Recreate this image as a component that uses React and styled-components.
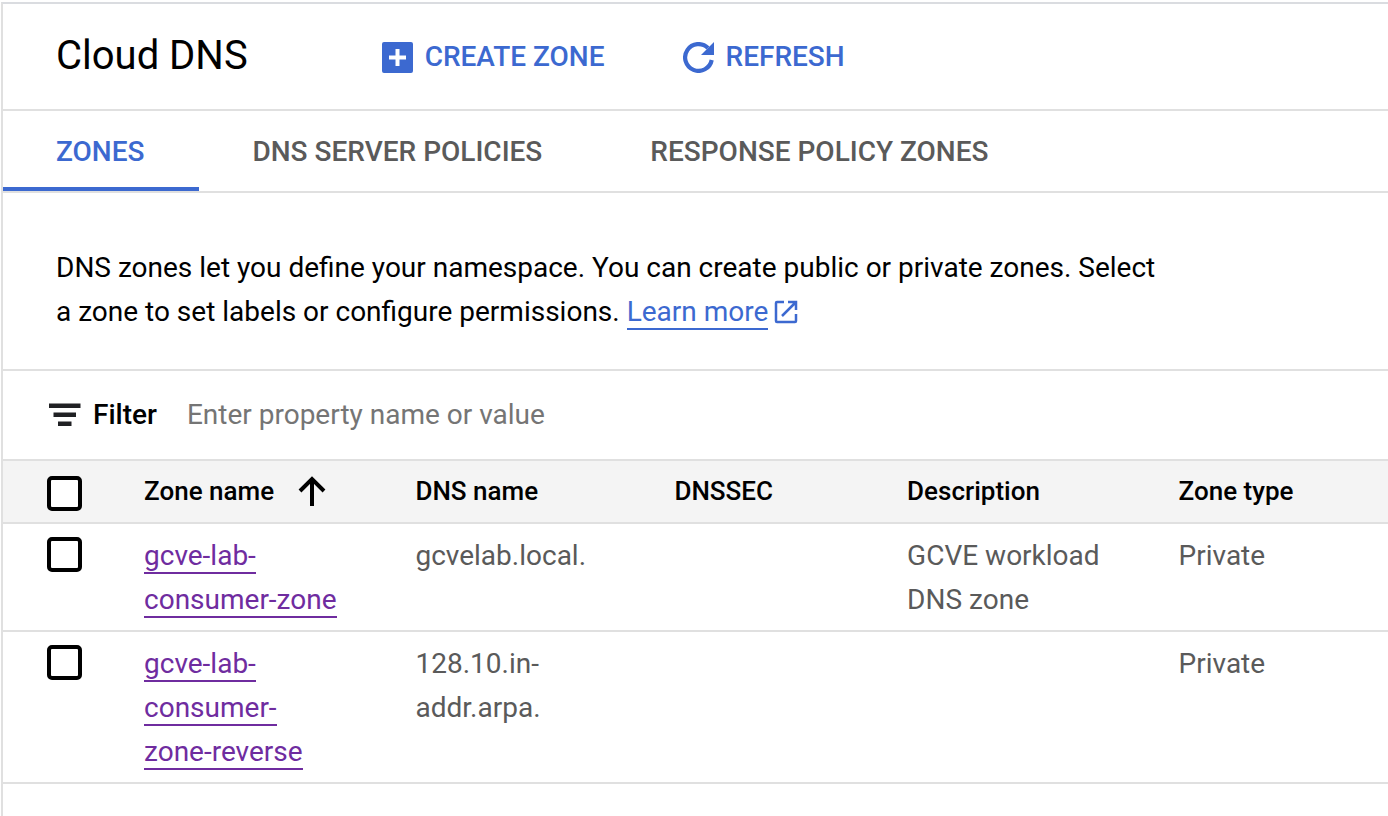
import React, { useState } from 'react';
import styled, { createGlobalStyle, css } from 'styled-components';

const GlobalStyle = createGlobalStyle`
	:root {
		--primary-clr: #3c69d0;
		--visited-clr: #6f2c9f;
		--soft-clr: #5a5a5a;
		--line-clr: #e0e0e0;
	}

	* {
		box-sizing: border-box;
	}

	body {
		margin: 0;
		background: #fff;
		color: #000;
		font-family: Roboto, 'Liberation Sans', sans-serif;
		font-size: 28px;
		line-height: 44px;
	}
`;

const Page = styled.div`
	min-height: 100vh;
	padding: 2px 0 0 1px;
	display: flex;
	flex-direction: column;
`;

const Panel = styled.main`
	flex: 1;
	border-top: 2px solid #dadce0;
	border-left: 2px solid var(--line-clr);
`;

const Header = styled.header`
	display: flex;
	align-items: center;
	padding: 28px 53px 29px;
	border-bottom: 2px solid var(--line-clr);
`;

const Title = styled.h1`
	margin: 0 134px 0 0;
	font-size: 40px;
	font-weight: 400;
	line-height: 48px;
`;

const Actions = styled.div`
	display: flex;
	gap: 78px;
	padding-top: 2px;
`;

const ActionButton = styled.button`
	display: flex;
	align-items: center;
	gap: 12px;
	padding: 0;
	border: 0;
	background: none;
	color: var(--primary-clr);
	font: inherit;
	font-weight: 500;
	cursor: pointer;
`;

const Tabs = styled.nav`
	display: flex;
	border-bottom: 2px solid var(--line-clr);
`;

const Tab = styled.button`
	padding: 19px 55px 13px 53px;
	border: 0;
	border-bottom: 4px solid transparent;
	background: none;
	color: var(--soft-clr);
	font: inherit;
	font-weight: 500;
	cursor: pointer;

	${({ $active }) =>
		$active &&
		css`
			color: var(--primary-clr);
			border-color: var(--primary-clr);
		`}
`;

const Intro = styled.p`
	margin: 0;
	max-width: 1216px;
	padding: 53px 53px 35px;
`;

const TextLink = styled.a`
	color: var(--primary-clr);
	text-decoration: none;
	border-bottom: 2px solid currentColor;
`;

const ZoneLink = styled(TextLink)`
	color: var(--visited-clr);
`;

const OpenIcon = styled.svg`
	margin-left: 6px;
	vertical-align: -3px;
	color: var(--primary-clr);
`;

const FilterBar = styled.div`
	display: flex;
	align-items: center;
	padding: 22px 46px;
	border-top: 2px solid var(--line-clr);
`;

const FilterLabel = styled.label`
	display: flex;
	align-items: center;
	gap: 12px;
	margin-right: 30px;
	font-weight: 500;
`;

const FilterInput = styled.input`
	flex: 1;
	min-width: 0;
	padding: 0;
	border: 0;
	outline: 0;
	background: none;
	color: inherit;
	font: inherit;

	&::placeholder {
		color: #757575;
		opacity: 1;
	}
`;

const Table = styled.table`
	width: 100%;
	table-layout: fixed;
	border-collapse: separate;
	border-spacing: 0;
	border-top: 2px solid var(--line-clr);
`;

const Col = styled.col`
	width: ${({ $width }) => $width};
`;

const HeadCell = styled.th`
	padding: 8px 75px 9px 0;
	border-bottom: 2px solid var(--line-clr);
	background: #f4f4f4;
	font-size: 26px;
	font-weight: 500;
	text-align: left;
	vertical-align: top;
`;

const Cell = styled.td`
	padding: 10px 75px 8px 0;
	border-bottom: 2px solid var(--line-clr);
	color: var(--soft-clr);
	vertical-align: top;
`;

const HeadCheckCell = styled(HeadCell)`
	padding: 15px 0 0 44px;
`;

const CheckCell = styled(Cell)`
	padding: 13px 0 0 44px;
`;

const SortButton = styled.button`
	display: flex;
	align-items: center;
	gap: 24px;
	padding: 0;
	border: 0;
	background: none;
	color: inherit;
	font: inherit;
	white-space: nowrap;
	cursor: pointer;
`;

const Checkbox = styled.input`
	appearance: none;
	display: block;
	width: 35px;
	height: 35px;
	margin: 0;
	border: 4px solid #000;
	border-radius: 5px;
	background: #fff;
	cursor: pointer;

	&:checked {
		background: var(--primary-clr);
		box-shadow: inset 0 0 0 4px #fff;
	}
`;

const AddIcon = () => (
	<svg width='31' height='31' viewBox='0 0 31 31' aria-hidden='true'>
		<path
			fill='currentColor'
			fillRule='evenodd'
			d='M2 0h27a2 2 0 0 1 2 2v27a2 2 0 0 1-2 2H2a2 2 0 0 1-2-2V2a2 2 0 0 1 2-2zm11.500 7v6.500H7v4h6.500V24h4v-6.500H24v-4h-6.500V7z'
		/>
	</svg>
);

const RefreshIcon = () => (
	<svg width='31' height='31' viewBox='0 0 31 31' aria-hidden='true'>
		<path
			d='M28.700 18A13.400 13.400 0 1 1 25 6'
			fill='none'
			stroke='currentColor'
			strokeWidth='4.200'
		/>
		<path d='M31 0v13H18z' fill='currentColor' />
	</svg>
);

const FilterIcon = () => (
	<svg width='32' height='24' viewBox='0 0 32 24' aria-hidden='true'>
		<path
			fill='#202124'
			d='M0 .500h31.500v4.500H0zM4.500 9.500h22.500v4.500H4.500zM9 18.500h13.500v4.500H9z'
		/>
	</svg>
);

const SortIcon = () => (
	<svg width='28' height='30' viewBox='0 0 28 30' aria-hidden='true'>
		<path
			d='M14 30V3M2 15L14 3l12 12'
			fill='none'
			stroke='currentColor'
			strokeWidth='4'
		/>
	</svg>
);

const columns = ['DNS name', 'DNSSEC', 'Description', 'Zone type'];

const zones = [
	{
		name: 'gcve-lab-consumer-zone',
		dns: 'gcvelab.local.',
		dnssec: '',
		description: 'GCVE workload DNS zone',
		type: 'Private',
	},
	{
		name: 'gcve-lab-consumer-zone-reverse',
		dns: '128.10.in-addr.arpa.',
		dnssec: '',
		description: '',
		type: 'Private',
	},
];

const tabs = ['ZONES', 'DNS SERVER POLICIES', 'RESPONSE POLICY ZONES'];

const App = () => {
	const [tab, setTab] = useState(tabs[0]);
	const [filter, setFilter] = useState('');

	return (
		<Page>
			<GlobalStyle />
			<Panel>
				<Header>
					<Title>Cloud DNS</Title>
					<Actions>
						<ActionButton type='button'>
							<AddIcon /> CREATE ZONE
						</ActionButton>
						<ActionButton type='button'>
							<RefreshIcon /> REFRESH
						</ActionButton>
					</Actions>
				</Header>
				<Tabs>
					{tabs.map((t) => (
						<Tab
							key={t}
							type='button'
							$active={t === tab}
							onClick={() => setTab(t)}
						>
							{t}
						</Tab>
					))}
				</Tabs>
				<Intro>
					DNS zones let you define your namespace. You can create
					public or private zones. Select a zone to set labels or
					configure permissions.{' '}
					<TextLink href='#learn-more'>Learn more</TextLink>
					<OpenIcon
						width='24'
						height='24'
						viewBox='0 0 24 24'
						fill='none'
						stroke='currentColor'
						strokeWidth='2.500'
						aria-hidden='true'
					>
						<path d='M10 2H3a1 1 0 0 0-1 1v18a1 1 0 0 0 1 1h18a1 1 0 0 0 1-1v-7M14 2h8v8M22 2L8 16' />
					</OpenIcon>
				</Intro>
				<FilterBar>
					<FilterLabel htmlFor='filter'>
						<FilterIcon /> Filter
					</FilterLabel>
					<FilterInput
						id='filter'
						type='text'
						placeholder='Enter property name or value'
						value={filter}
						onChange={(e) => setFilter(e.target.value)}
					/>
				</FilterBar>
				<Table>
					<colgroup>
						<Col $width='141px' />
						<Col $width='19.6%' />
						<Col $width='18.7%' />
						<Col $width='16.8%' />
						<Col $width='19.6%' />
						<Col />
					</colgroup>
					<thead>
						<tr>
							<HeadCheckCell>
								<Checkbox
									type='checkbox'
									aria-label='Select all zones'
								/>
							</HeadCheckCell>
							<HeadCell aria-sort='ascending'>
								<SortButton type='button'>
									Zone name <SortIcon />
								</SortButton>
							</HeadCell>
							{columns.map((c) => (
								<HeadCell key={c}>{c}</HeadCell>
							))}
						</tr>
					</thead>
					<tbody>
						{zones.map((z) => (
							<tr key={z.name}>
								<CheckCell>
									<Checkbox
										type='checkbox'
										aria-label={`Select ${z.name}`}
									/>
								</CheckCell>
								<Cell>
									<ZoneLink href={`#${z.name}`}>
										{z.name}
									</ZoneLink>
								</Cell>
								<Cell>{z.dns}</Cell>
								<Cell>{z.dnssec}</Cell>
								<Cell>{z.description}</Cell>
								<Cell>{z.type}</Cell>
							</tr>
						))}
					</tbody>
				</Table>
			</Panel>
		</Page>
	);
};

export default App;
